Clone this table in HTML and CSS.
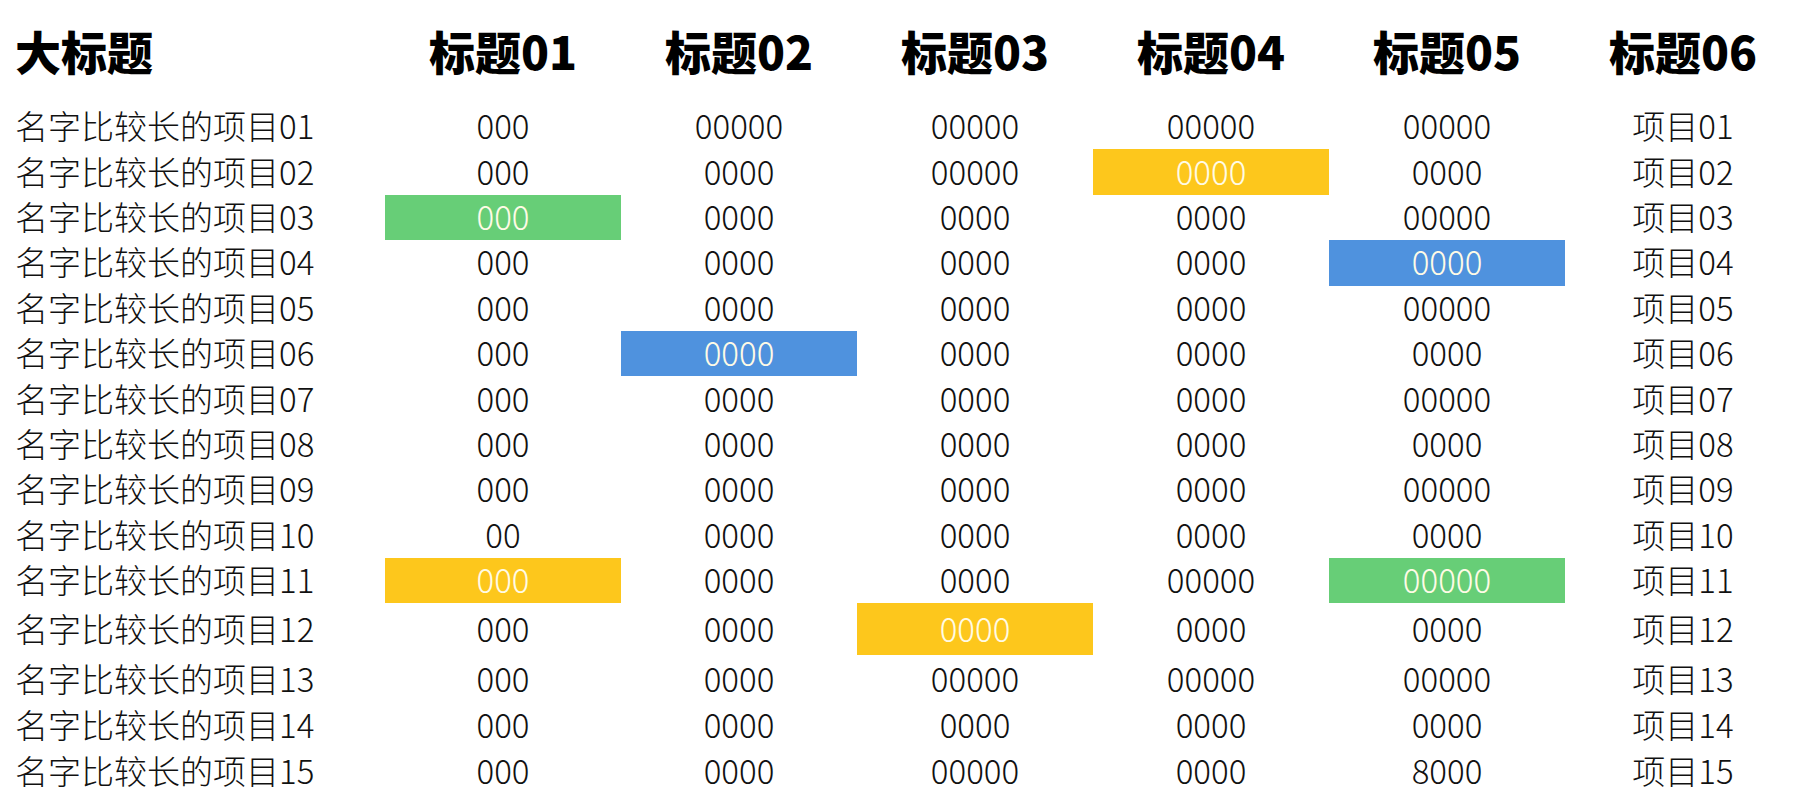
FILE: index.html
```html
<!DOCTYPE html>
<html lang="zh-CN">
<head>
<meta charset="utf-8">
<title>大标题</title>
<link rel="stylesheet" href="styles.css">
</head>
<body>
<div class="sheet">
  <div class="row head">
    <div class="cell name">大标题</div>
    <div class="cell">标题01</div>
    <div class="cell">标题02</div>
    <div class="cell">标题03</div>
    <div class="cell">标题04</div>
    <div class="cell">标题05</div>
    <div class="cell">标题06</div>
  </div>
  <div class="row">
    <div class="cell name">名字比较长的项目01</div>
    <div class="cell">000</div><div class="cell">00000</div><div class="cell">00000</div><div class="cell">00000</div><div class="cell">00000</div><div class="cell">项目01</div>
  </div>
  <div class="row">
    <div class="cell name">名字比较长的项目02</div>
    <div class="cell">000</div><div class="cell">0000</div><div class="cell">00000</div><div class="cell hl yellow">0000</div><div class="cell">0000</div><div class="cell">项目02</div>
  </div>
  <div class="row">
    <div class="cell name">名字比较长的项目03</div>
    <div class="cell hl green">000</div><div class="cell">0000</div><div class="cell">0000</div><div class="cell">0000</div><div class="cell">00000</div><div class="cell">项目03</div>
  </div>
  <div class="row">
    <div class="cell name">名字比较长的项目04</div>
    <div class="cell">000</div><div class="cell">0000</div><div class="cell">0000</div><div class="cell">0000</div><div class="cell hl blue">0000</div><div class="cell">项目04</div>
  </div>
  <div class="row">
    <div class="cell name">名字比较长的项目05</div>
    <div class="cell">000</div><div class="cell">0000</div><div class="cell">0000</div><div class="cell">0000</div><div class="cell">00000</div><div class="cell">项目05</div>
  </div>
  <div class="row">
    <div class="cell name">名字比较长的项目06</div>
    <div class="cell">000</div><div class="cell hl blue">0000</div><div class="cell">0000</div><div class="cell">0000</div><div class="cell">0000</div><div class="cell">项目06</div>
  </div>
  <div class="row">
    <div class="cell name">名字比较长的项目07</div>
    <div class="cell">000</div><div class="cell">0000</div><div class="cell">0000</div><div class="cell">0000</div><div class="cell">00000</div><div class="cell">项目07</div>
  </div>
  <div class="row">
    <div class="cell name">名字比较长的项目08</div>
    <div class="cell">000</div><div class="cell">0000</div><div class="cell">0000</div><div class="cell">0000</div><div class="cell">0000</div><div class="cell">项目08</div>
  </div>
  <div class="row">
    <div class="cell name">名字比较长的项目09</div>
    <div class="cell">000</div><div class="cell">0000</div><div class="cell">0000</div><div class="cell">0000</div><div class="cell">00000</div><div class="cell">项目09</div>
  </div>
  <div class="row">
    <div class="cell name">名字比较长的项目10</div>
    <div class="cell">00</div><div class="cell">0000</div><div class="cell">0000</div><div class="cell">0000</div><div class="cell">0000</div><div class="cell">项目10</div>
  </div>
  <div class="row">
    <div class="cell name">名字比较长的项目11</div>
    <div class="cell hl yellow">000</div><div class="cell">0000</div><div class="cell">0000</div><div class="cell">00000</div><div class="cell hl green">00000</div><div class="cell">项目11</div>
  </div>
  <div class="row tall">
    <div class="cell name">名字比较长的项目12</div>
    <div class="cell">000</div><div class="cell">0000</div><div class="cell hl yellow">0000</div><div class="cell">0000</div><div class="cell">0000</div><div class="cell">项目12</div>
  </div>
  <div class="row mid">
    <div class="cell name">名字比较长的项目13</div>
    <div class="cell">000</div><div class="cell">0000</div><div class="cell">00000</div><div class="cell">00000</div><div class="cell">00000</div><div class="cell">项目13</div>
  </div>
  <div class="row">
    <div class="cell name">名字比较长的项目14</div>
    <div class="cell">000</div><div class="cell">0000</div><div class="cell">0000</div><div class="cell">0000</div><div class="cell">0000</div><div class="cell">项目14</div>
  </div>
  <div class="row">
    <div class="cell name">名字比较长的项目15</div>
    <div class="cell">000</div><div class="cell">0000</div><div class="cell">00000</div><div class="cell">0000</div><div class="cell">8000</div><div class="cell">项目15</div>
  </div>
</div>
</body>
</html>
```

FILE: styles.css
```css
html, body {
  margin: 0;
  padding: 0;
  background: #ffffff;
}

body {
  font-family: "Noto Sans CJK SC Light", "Noto Sans CJK SC DemiLight", "Noto Sans CJK SC", "Noto Sans", sans-serif;
  color: #111111;
}

.sheet {
  display: flex;
  flex-direction: column;
  width: 1801px;
}

.row {
  display: grid;
  grid-template-columns: 385px repeat(6, 236px);
  grid-template-rows: 100%;
  height: 45.4px;
  font-size: 33px;
  font-weight: 300;
  line-height: 1;
}

.row.head {
  height: 104px;
  font-family: "Noto Sans CJK SC Black", "Noto Sans CJK SC", "Noto Sans", sans-serif;
  font-size: 46px;
  font-weight: 900;
  color: #000000;
}

.row.tall {
  height: 52px;
}

.row.mid {
  height: 48px;
}

.cell {
  display: flex;
  align-items: center;
  justify-content: center;
  white-space: nowrap;
  box-sizing: border-box;
  padding-bottom: 2px;
}

.row.head .cell {
  padding-bottom: 4px;
}

.cell.name {
  justify-content: flex-start;
  padding-left: 15px;
}

.hl {
  color: #fffbe6;
}

.green {
  background: #67ce77;
}

.blue {
  background: #4f92de;
}

.yellow {
  background: #fdc71c;
}
```
